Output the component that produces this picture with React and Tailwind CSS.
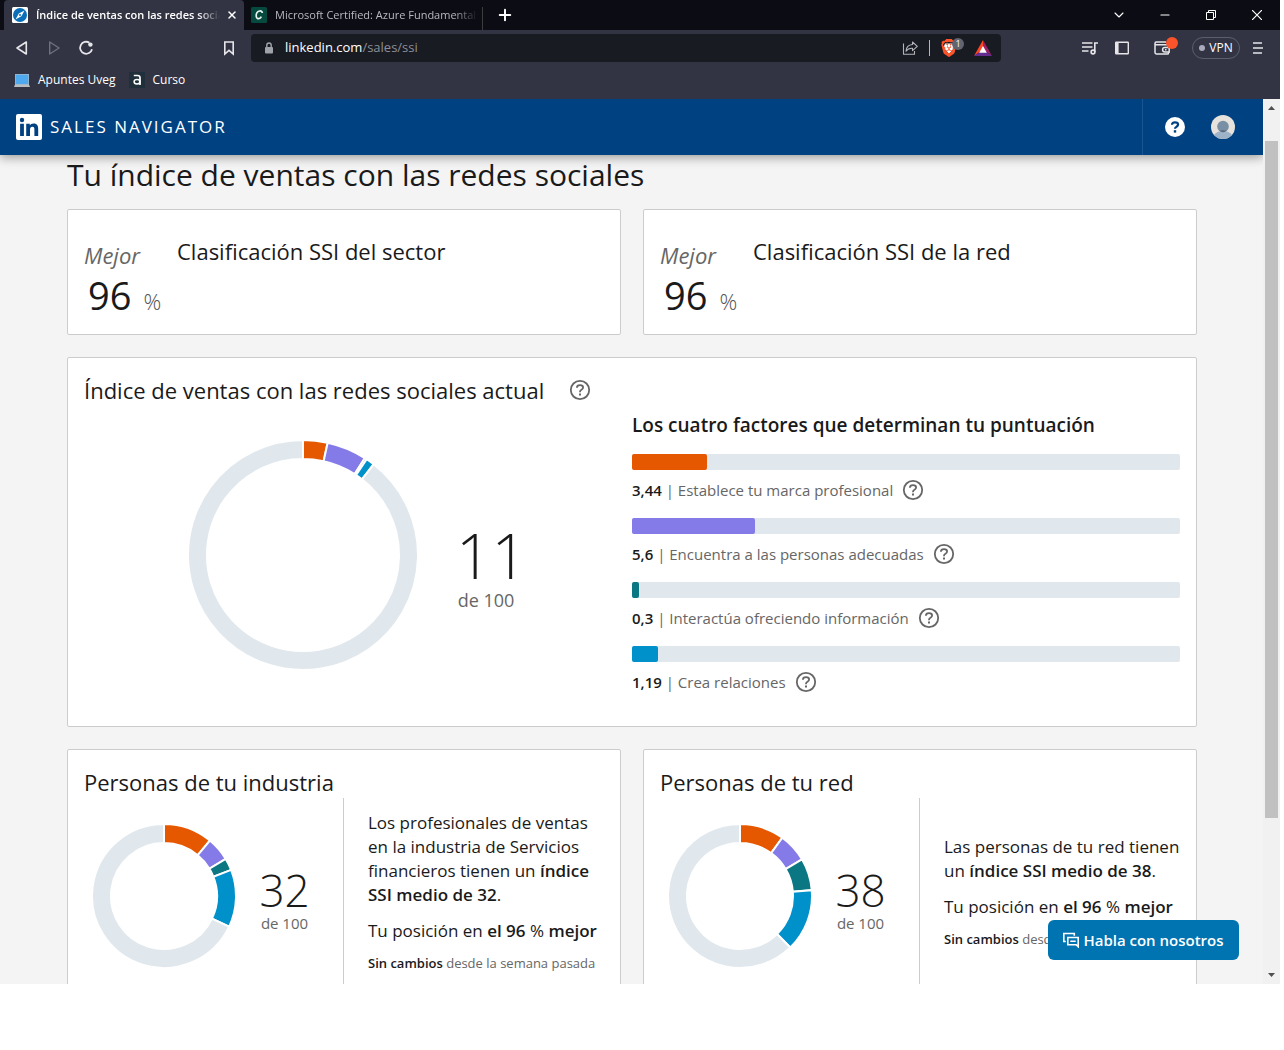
import { ChevronDown, Minus, Plus, X } from "lucide-react";
import { SiBrave } from "react-icons/si";

const COLORS = ["#e55800", "#847be8", "#0a7783", "#0091ca"];
const TRACK = "#e1e8ed";

const factors = [
  { id: "marca", value: 3.44, text: "3,44", label: "Establece tu marca profesional", color: COLORS[0] },
  { id: "personas", value: 5.6, text: "5,6", label: "Encuentra a las personas adecuadas", color: COLORS[1] },
  { id: "info", value: 0.3, text: "0,3", label: "Interactúa ofreciendo información", color: COLORS[2] },
  { id: "relaciones", value: 1.19, text: "1,19", label: "Crea relaciones", color: COLORS[3] },
];

function slicePath(c, outer, inner, from, to) {
  const point = (r, pct) => {
    const a = (pct / 100) * 2 * Math.PI;
    return `${(c + r * Math.sin(a)).toFixed(2)} ${(c - r * Math.cos(a)).toFixed(2)}`;
  };
  const large = to - from > 50 ? 1 : 0;
  return `M${point(outer, from)}A${outer} ${outer} 0 ${large} 1 ${point(outer, to)}L${point(inner, to)}A${inner} ${inner} 0 ${large} 0 ${point(inner, from)}Z`;
}

function Donut({ size, values, className }) {
  const outer = size / 2;
  const inner = outer - 19;
  let start = 0;
  const slices = values.map((v, i) => {
    const slice = { from: start, to: start + v, color: COLORS[i] };
    start += v;
    return slice;
  });
  slices.push({ from: start, to: 100, color: TRACK });

  return (
    <svg viewBox={`0 0 ${size} ${size}`} className={className} aria-hidden="true">
      {slices.map((s) => (
        <path
          key={s.color}
          d={slicePath(outer, outer, inner, s.from, s.to)}
          fill={s.color}
          stroke="#fff"
          strokeWidth="2"
        />
      ))}
    </svg>
  );
}

function HelpButton({ label }) {
  return (
    <button type="button" aria-label={label} className="shrink-0 text-[#666]">
      <svg viewBox="0 0 24 24" className="size-6" fill="none" stroke="currentColor" strokeWidth="1.8">
        <circle cx="12" cy="12" r="9.2" />
        <path d="M8.9 9.7C8.9 8.1 10.2 7.2 12 7.2s3.1.9 3.1 2.4c0 1.1-.6 1.6-1.6 2.2-1 .6-1.5 1-1.5 1.9v.6" />
        <path d="M12 15.5v2" strokeWidth="2" />
      </svg>
    </button>
  );
}

function WindowTabs() {
  return (
    <div className="flex h-[30px] shrink-0 items-stretch bg-[#0b0c14] text-[11px] text-white">
      <div className="ml-1 flex w-60 items-center rounded-t-sm bg-[#323443] pl-2 pr-1">
        <svg viewBox="0 0 16 16" className="size-4 shrink-0">
          <rect width="16" height="16" rx="1.5" fill="#fff" />
          <circle cx="8" cy="8" r="7" fill="#0a6fb8" />
          <path d="M12.5 3.5 9.4 9.2 3.5 12.5 6.8 6.6Z" fill="#fff" />
          <circle cx="8" cy="8" r="1" fill="#0a6fb8" />
        </svg>
        <span className="ml-2 flex-1 overflow-hidden whitespace-nowrap font-semibold [mask-image:linear-gradient(to_right,#000_88%,transparent)]">
          Índice de ventas con las redes sociales
        </span>
        <button type="button" aria-label="Cerrar pestaña" className="ml-1 flex size-4 items-center justify-center">
          <X className="size-3" strokeWidth={3} />
        </button>
      </div>
      <div className="flex w-[238px] items-center pl-[7px] pr-1">
        <svg viewBox="0 0 16 16" className="size-4 shrink-0">
          <rect width="16" height="16" rx="1.5" fill="#05493f" />
          <path d="M11.3 6C11.2 4.4 9.9 3.6 8.5 4 6.4 4.6 5 7 5.200 9.300c.2 1.900 1.500 2.700 3.100 2.200 1-.3 1.600-1 2-1.800" fill="none" stroke="#e8f3ee" strokeWidth="1.700" />
        </svg>
        <span className="ml-2 flex-1 overflow-hidden whitespace-nowrap text-[#b9bac0] [mask-image:linear-gradient(to_right,#000_88%,transparent)]">
          Microsoft Certified: Azure Fundamentals
        </span>
      </div>
      <div className="mt-[7px] w-px bg-[#3c3c40]" />
      <button type="button" aria-label="Nueva pestaña" className="ml-2 flex w-7 items-center justify-center">
        <Plus className="size-[18px]" strokeWidth={2.6} />
      </button>
      <div className="ml-auto flex">
        <button type="button" aria-label="Buscar pestañas" className="flex w-[46px] items-center justify-center">
          <ChevronDown className="size-4" strokeWidth={1.6} />
        </button>
        <button type="button" aria-label="Minimizar" className="flex w-[46px] items-center justify-center">
          <Minus className="size-[14px]" strokeWidth={1.8} />
        </button>
        <button type="button" aria-label="Restaurar" className="flex w-[46px] items-center justify-center">
          <svg viewBox="0 0 10 10" className="size-[10px]" fill="none" stroke="currentColor">
            <path d="M.5 2.5h7v7h-7zM2.5 2V.5h7v7H8" />
          </svg>
        </button>
        <button type="button" aria-label="Cerrar" className="flex w-[46px] items-center justify-center">
          <svg viewBox="0 0 10 10" className="size-[10px]" stroke="currentColor" strokeWidth="1.2">
            <path d="M0 0 10 10M10 0 0 10" />
          </svg>
        </button>
      </div>
    </div>
  );
}

function Toolbar() {
  return (
    <div className="flex h-9 shrink-0 items-center bg-[#323443] pl-[6px] pr-3 text-[#e6e6ea]">
      <button type="button" aria-label="Atrás" className="flex w-8 justify-center">
        <svg viewBox="0 0 16 16" className="size-4" fill="none" stroke="currentColor" strokeWidth="1.6" strokeLinejoin="round">
          <path d="M12.3 2v12L3 8Z" />
        </svg>
      </button>
      <button type="button" aria-label="Adelante" className="flex w-8 justify-center text-[#6f717d]">
        <svg viewBox="0 0 16 16" className="size-4" fill="none" stroke="currentColor" strokeWidth="1.4" strokeLinejoin="round">
          <path d="M3.7 2v12L13 8Z" />
        </svg>
      </button>
      <button type="button" aria-label="Recargar" className="flex w-8 justify-center">
        <svg viewBox="0 0 16 16" className="size-4" fill="none" stroke="currentColor" strokeWidth="1.8">
          <path d="M11.4 2.7A6 6 0 1 0 14 9.2" />
          <circle cx="12.4" cy="4.6" r="2.2" fill="currentColor" stroke="none" />
        </svg>
      </button>
      <button type="button" aria-label="Añadir marcador" className="ml-[111px] flex w-8 justify-center">
        <svg viewBox="0 0 16 16" className="size-4" fill="none" stroke="currentColor" strokeWidth="1.6">
          <path d="M3.8 2h8.4v12L8 10.4 3.8 14Z" />
        </svg>
      </button>

      <div className="ml-[6px] flex h-7 flex-1 items-center rounded-sm bg-[#191b22] pl-[13px] pr-[9px] text-[13px]">
        <svg viewBox="0 0 10 12" className="h-3 w-[10px]" fill="none">
          <rect x="1" y="5" width="8" height="6.5" rx="1" fill="#a0a2aa" />
          <path d="M2.8 5.5V3.2a2.2 2.2 0 0 1 4.4 0v2.3" stroke="#a0a2aa" strokeWidth="1.4" />
        </svg>
        <a href="#ssi" className="ml-[11px] text-[#8d8f98]">
          <span className="text-white">linkedin.com</span>/sales/ssi
        </a>
        <button type="button" aria-label="Compartir" className="ml-auto text-[#b4b5bb]">
          <svg viewBox="0 0 16 16" className="size-4" fill="none" stroke="currentColor" strokeWidth="1.1" strokeLinejoin="round">
            <path d="M1.5 3.5v10.7h11V11" />
            <path d="M10.5 2 15.3 6.3 10.5 10.6V8.2C7.5 8 5.5 9 4 11.2 4.2 7.4 6.3 4.8 10.5 4.5Z" />
          </svg>
        </button>
        <div className="ml-[11px] h-4 w-px bg-[#b4b5bb]" />
        <button type="button" aria-label="Brave Shields" className="relative ml-[10px] flex h-6 w-[30px] items-center">
          <svg viewBox="0 0 18 18" className="size-[18px]">
            <path d="M5 4.5h8l1.5 4L9 15 3.5 8.5Z" fill="#fff" />
            <SiBrave size={18} color="#fb542b" />
          </svg>
          <span className="absolute right-[6px] top-[2px] size-3 rounded-full bg-[#62656f] text-center text-[9px] leading-3 text-white">1</span>
        </button>
        <button type="button" aria-label="Brave Rewards" className="ml-1">
          <svg viewBox="0 0 18 16" className="h-4 w-[18px]">
            <path d="M9 0 0 16 9 9.5Z" fill="#ff4724" />
            <path d="M9 0 18 16 9 9.5Z" fill="#9e1f63" />
            <path d="M0 16h18L9 9.5Z" fill="#662d91" />
            <path d="M9 6 12.8 12.8H5.2Z" fill="#fff" />
          </svg>
        </button>
      </div>

      <button type="button" aria-label="Lista de reproducción" className="ml-[73px] flex w-8 justify-center">
        <svg viewBox="0 0 16 16" className="size-4" fill="none" stroke="currentColor" strokeWidth="1.6">
          <path d="M0 3h10.5M0 7h10.5M0 11h6.5M12.8 12V3H16" />
          <circle cx="11" cy="12" r="1.9" />
        </svg>
      </button>
      <button type="button" aria-label="Barra lateral" className="flex w-8 justify-center">
        <svg viewBox="0 0 16 16" className="size-4" fill="none" stroke="currentColor" strokeWidth="1.4">
          <rect x="1.7" y="2.2" width="12.6" height="11.6" rx=".5" />
          <path d="M3 2.5v11" strokeWidth="3.2" />
        </svg>
      </button>
      <button type="button" aria-label="Cartera" className="relative ml-2 flex w-8 justify-center">
        <svg viewBox="0 0 16 16" className="size-4" fill="none" stroke="currentColor" strokeWidth="1.5">
          <path d="M14.5 8V4.8H2.2C.6 4.8.6 2 2.2 2H12M1 3.4v9.2C1 13.4 1.6 14 2.4 14h11c.6 0 1.1-.5 1.1-1.1V12" />
          <path d="M15.2 7.6h-4.4a2.2 2.2 0 0 0 0 4.4h4.4zM11 9.8h1.5" />
        </svg>
        <span className="absolute -top-[3px] right-0 size-3 rounded-full bg-[#fb542b]" />
      </button>
      <button type="button" className="ml-[14px] flex h-[22px] w-12 items-center justify-center gap-1 rounded-full border border-[#5c5e70] text-xs text-white">
        <span className="size-[6px] rounded-full bg-[#a9abbd]" />
        VPN
      </button>
      <button type="button" aria-label="Menú" className="ml-2 flex w-5 justify-center">
        <svg viewBox="0 0 10 12" className="h-3 w-[10px]" stroke="currentColor" strokeWidth="1.6">
          <path d="M0 1h9M0 6h10M0 11h9" />
        </svg>
      </button>
    </div>
  );
}

function Bookmarks() {
  return (
    <div className="flex h-[33px] shrink-0 items-start bg-[#323443] pl-[14px] pt-[5px] text-xs text-white">
      <a href="#apuntes" className="flex h-[18px] items-center gap-2">
        <svg viewBox="0 0 16 16" className="size-4">
          <rect x="1.5" y="2.5" width="13" height="10" fill="#4fa9ee" stroke="#8fb3cf" />
          <path d="M1 12.5h14l1 2.5H0Z" fill="#b9bdc2" />
        </svg>
        Apuntes Uveg
      </a>
      <a href="#curso" className="ml-[13px] flex h-[18px] items-center gap-2">
        <svg viewBox="0 0 16 16" className="size-4">
          <rect width="16" height="16" fill="#20303a" />
          <path d="M4.8 3.5h3.7c1.7 0 2.5.8 2.5 2.3V13" fill="none" stroke="#fff" strokeWidth="1.7" />
          <ellipse cx="8" cy="9.8" rx="2.9" ry="2.2" fill="none" stroke="#fff" strokeWidth="1.5" />
        </svg>
        Curso
      </a>
    </div>
  );
}

function SiteHeader() {
  return (
    <header className="relative z-10 flex h-14 shrink-0 items-center bg-[#004182] pl-4 pr-4 text-white shadow-[0_2px_10px_rgba(0,0,0,0.4)]">
      <a href="#inicio" className="flex items-center gap-2">
        <svg viewBox="0 0 26 26" className="size-[26px]">
          <rect width="26" height="26" rx="2" fill="#fff" />
          <g fill="#004182">
            <circle cx="6" cy="6" r="2.2" />
            <path d="M4.1 9.8h3.8V22H4.1zM10.2 9.8h3.6v1.7c.6-1.1 1.9-2 3.8-2 3.8 0 4.6 2.5 4.6 5.8V22h-3.8v-6c0-1.5 0-3.3-2-3.3S14 14.3 14 15.9V22h-3.8z" />
          </g>
        </svg>
        <span className="text-[17px] tracking-[2px]">SALES NAVIGATOR</span>
      </a>
      <div className="ml-auto flex items-center self-stretch border-l border-[#1a5492] pl-5 pr-3">
        <button type="button" aria-label="Ayuda" className="flex size-6 items-center justify-center">
          <svg viewBox="0 0 20 20" className="size-5">
            <circle cx="10" cy="10" r="10" fill="#fff" />
            <path d="M7 7.8C7 6.2 8.2 5.3 10 5.3s3.1.9 3.1 2.3c0 1.1-.6 1.6-1.6 2.2-.8.5-1.5.9-1.5 1.9" fill="none" stroke="#004182" strokeWidth="2.2" />
            <rect x="8.8" y="13.2" width="2.4" height="2.4" fill="#004182" />
          </svg>
        </button>
        <button type="button" aria-label="Tu perfil" className="ml-6 flex size-6 items-center justify-center">
          <svg viewBox="0 0 24 24" className="size-6">
            <clipPath id="avatar-clip">
              <circle cx="12" cy="12" r="12" />
            </clipPath>
            <g clipPath="url(#avatar-clip)">
              <rect width="24" height="24" fill="#e7e2dc" />
              <path d="M2 24c0-5 4-8 10-8s10 3 10 8Z" fill="#9db3c8" />
              <circle cx="12" cy="11.5" r="5.8" fill="#788fa5" />
              <path d="M8.5 15.8c2 1.8 5 1.8 7 0-2-.8-5-.8-7 0Z" fill="#56687a" />
            </g>
          </svg>
        </button>
      </div>
    </header>
  );
}

function Card({ className = "", children }) {
  return (
    <section className={`rounded-xs border border-[#ccc] bg-white px-4 ${className}`}>
      {children}
    </section>
  );
}

function RankCard({ title }) {
  return (
    <Card className="flex items-start pb-[15px] pt-[25px]">
      <div className="mt-1 w-[93px] shrink-0">
        <p className="text-[22px] italic leading-8 text-[#666]">Mejor</p>
        <p className="flex h-12 items-center pl-1 text-[38px] leading-[48px]">
          96
          <span className="ml-3 mt-3 text-[22px] font-light leading-6 text-[#555]">%</span>
        </p>
      </div>
      <h2 className="text-[22px] leading-8">{title}</h2>
    </Card>
  );
}

function PeopleCard({ title, score, values, children }) {
  return (
    <Card className="pb-4 pt-[18px]">
      <h2 className="pb-[2px] text-[22px] leading-7">{title}</h2>
      <div className="flex min-h-[196px]">
        <div className="flex w-[259px] shrink-0 items-center pl-2 pr-[10px]">
          <Donut size={144} values={values} className="size-36 shrink-0" />
          <div className="flex-1 pt-2 text-center">
            <p className="text-[44px] font-light leading-[46px]">{score}</p>
            <p className="text-[15px] leading-5 text-[#666]">de 100</p>
          </div>
        </div>
        <div className="-mr-1 flex flex-1 flex-col justify-center border-l border-[#ccc] pb-[6px] pl-6">
          <p className="text-[17px] leading-6">{children}</p>
          <p className="mt-3 whitespace-nowrap text-[17px] leading-6">
            Tu posición en <b className="font-semibold">el 96</b> % <b className="font-semibold">mejor</b>
          </p>
          <p className="mt-2 whitespace-nowrap text-[13px] leading-6 text-[#666]">
            <b className="font-semibold text-[#1a1a1a]">Sin cambios</b> desde la semana pasada
          </p>
        </div>
      </div>
    </Card>
  );
}

function CurrentIndex() {
  return (
    <Card className="mt-[22px] pb-6 pt-4">
      <div className="flex items-center gap-6 pb-[2px]">
        <h2 className="text-[22px] leading-8">Índice de ventas con las redes sociales actual</h2>
        <HelpButton label="Qué es el índice de ventas" />
      </div>
      <div className="grid grid-cols-2">
        <div className="flex items-center justify-center gap-[38px] pr-3">
          <Donut size={230} values={factors.map((f) => f.value)} className="size-[230px]" />
          <div className="w-[60px] pt-7 text-center">
            <p className="text-[62px] font-light leading-[62px]">11</p>
            <p className="whitespace-nowrap text-lg leading-7 text-[#666]">de 100</p>
          </div>
        </div>
        <div className="pt-[5px]">
          <h3 className="text-[19px] font-semibold leading-6">Los cuatro factores que determinan tu puntuación</h3>
          <ul className="mt-[17px] flex flex-col gap-2">
            {factors.map((f) => (
              <li key={f.id}>
                <div className="h-4 rounded-xs bg-[#e1e8ed]">
                  <div
                    className="h-4 rounded-xs"
                    style={{ width: `${(f.value / 25) * 100}%`, backgroundColor: f.color }}
                  />
                </div>
                <div className="flex h-10 items-center gap-2 text-[15px] text-[#666]">
                  <span>
                    <b className="font-semibold text-[#1a1a1a]">{f.text}</b> | {f.label}
                  </span>
                  <HelpButton label={f.label} />
                </div>
              </li>
            ))}
          </ul>
        </div>
      </div>
    </Card>
  );
}

function Scrollbar() {
  return (
    <div className="flex w-[17px] shrink-0 flex-col items-center bg-[#f1f1f1]" aria-hidden="true">
      <svg viewBox="0 0 17 17" className="size-[17px] shrink-0">
        <path d="M8.5 7 12 11H5Z" fill="#505050" />
      </svg>
      <div className="mt-[25px] h-[677px] w-[13px] bg-[#c1c1c1]" />
      <svg viewBox="0 0 17 17" className="mt-auto size-[17px] shrink-0">
        <path d="M5 6h7L8.5 10Z" fill="#505050" />
      </svg>
    </div>
  );
}

export default function App() {
  return (
    <div className="flex h-screen flex-col bg-white pb-[66px] pr-1 font-['Open_Sans','Noto_Sans',sans-serif] text-[#1a1a1a]">
      <WindowTabs />
      <Toolbar />
      <Bookmarks />

      <div className="relative flex min-h-0 flex-1 overflow-hidden">
        <div className="flex min-w-0 flex-1 flex-col overflow-hidden bg-[#f4f4f4]">
          <SiteHeader />
          <main className="min-h-0 flex-1 overflow-hidden pl-[67px] pr-[66px]">
            <h1 className="text-[30px] leading-10">Tu índice de ventas con las redes sociales</h1>
            <div className="mt-[14px] grid grid-cols-2 gap-[22px]">
              <RankCard title="Clasificación SSI del sector" />
              <RankCard title="Clasificación SSI de la red" />
            </div>
            <CurrentIndex />
            <div className="mt-[22px] grid grid-cols-2 gap-[22px]">
              <PeopleCard title="Personas de tu industria" score="32" values={[11, 5.4, 2.7, 12.9]}>
                Los profesionales de ventas en la industria de Servicios financieros tienen un{" "}
                <b className="font-semibold">índice SSI medio de 32</b>.
              </PeopleCard>
              <PeopleCard title="Personas de tu red" score="38" values={[10, 6.5, 7.2, 14]}>
                Las personas de tu red tienen un <b className="font-semibold">índice SSI medio de 38</b>.
              </PeopleCard>
            </div>
          </main>
        </div>
        <Scrollbar />

        <button
          type="button"
          className="absolute bottom-6 right-[41px] z-20 flex h-10 w-[191px] items-center justify-center gap-1 rounded-md bg-[#0073b1] text-[15px] font-semibold text-white"
        >
          <svg viewBox="0 0 16 16" className="size-4 shrink-0" fill="none" stroke="currentColor" strokeWidth="1.6">
            <path d="M2.8 9.5H.8V1.5h10.5v2.2" />
            <path d="M4.8 5.5h10.4v9.2l-2-2H4.8zM7.3 9.2h5.4" />
          </svg>
          Habla con nosotros
        </button>
      </div>
    </div>
  );
}
